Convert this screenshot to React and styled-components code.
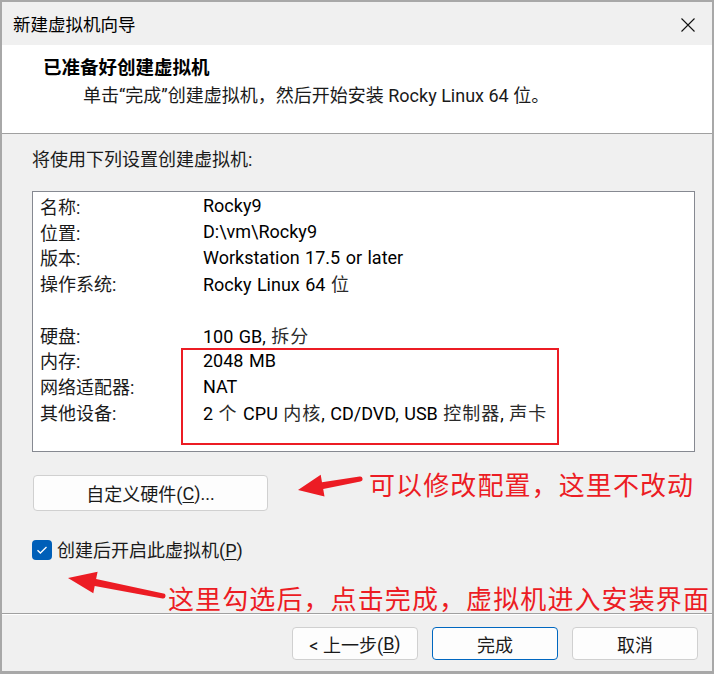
import styled, { createGlobalStyle } from "styled-components";

const GlobalStyle = createGlobalStyle`
  html, body {
    margin: 0;
    padding: 0;
    background: #ffffff;
  }
  * {
    box-sizing: border-box;
  }
`;

const UI_FONT = `Roboto, "Noto Sans CJK SC", sans-serif`;
const RED = "#ec1c24";

const Window = styled.div`
  width: 714px;
  height: 674px;
  border: 2px solid #a8a8a8;
  border-bottom-width: 3px;
  background: #f0f0f0;
  display: flex;
  flex-direction: column;
  font-family: ${UI_FONT};
  color: #1a1a1a;
`;

const TitleBar = styled.div`
  height: 43px;
  flex: none;
  display: flex;
  align-items: center;
  justify-content: space-between;
  padding: 0 17px 0 11px;
  background: #f0f0f0;
`;

const Title = styled.div`
  font-size: 17.5px;
  color: #000;
`;

const CloseBtn = styled.div`
  width: 14px;
  height: 14px;
  display: flex;
  margin-top: 2px;
`;

const Header = styled.div`
  height: 89px;
  flex: none;
  background: #ffffff;
  border-bottom: 1px solid #a0a0a0;
  padding: 10px 0 0 41px;
`;

const HeadTitle = styled.div`
  font-size: 18.5px;
  font-weight: 700;
  line-height: 26px;
  color: #000;
`;

const HeadSub = styled.div`
  margin-top: 2px;
  padding-left: 40px;
  font-size: 18px;
  line-height: 26px;
  color: #1a1a1a;
`;

const Body = styled.div`
  height: 479px;
  flex: none;
  padding: 13px 17px 0 30px;
  display: flex;
  flex-direction: column;
  font-size: 18px;
`;

const Intro = styled.div`
  line-height: 25px;
`;

const ListBox = styled.div`
  position: relative;
  margin-top: 19px;
  height: 264px;
  background: #ffffff;
  border: 1px solid #868991;
  padding: 1px 7px;
  display: grid;
  grid-template-columns: 163px 1fr;
  grid-auto-rows: 25.75px;
  align-items: center;
`;

const Label = styled.div`
  color: #1a1a1a;
`;

const Value = styled.div`
  color: #000;
  white-space: nowrap;
  word-spacing: 1px;
`;

const Han = styled.span`
  color: #2a2a2a;
  letter-spacing: 1px;
`;

const Spacer = styled.div`
  grid-column: 1 / -1;
`;

const Highlight = styled.div`
  position: absolute;
  left: 148px;
  top: 156px;
  width: 378px;
  height: 97px;
  border: 2px solid ${RED};
`;

const ActionRow = styled.div`
  margin-top: 23px;
  display: flex;
  align-items: flex-start;
`;

const Button = styled.button`
  width: ${(p) => p.$w}px;
  height: ${(p) => p.$h}px;
  flex: none;
  margin-left: ${(p) => p.$ml || 0}px;
  background: #fdfdfd;
  border: 1px solid ${(p) => (p.$primary ? "#0067c0" : "#d0d0d0")};
  border-radius: 4px;
  font-family: ${UI_FONT};
  font-size: 18px;
  color: #1a1a1a;
  padding: 0;
  display: flex;
  align-items: center;
  justify-content: center;
`;

const Key = styled.span`
  text-decoration: underline;
  text-underline-offset: 2px;
`;

const Note = styled.div`
  font-family: "Noto Sans CJK SC", sans-serif;
  font-size: 26px;
  letter-spacing: 1.1px;
  line-height: 30px;
  color: ${RED};
  white-space: nowrap;
  margin-top: ${(p) => p.$mt}px;
  margin-left: ${(p) => p.$ml}px;
`;

const Arrow = styled.svg`
  flex: none;
  display: block;
  margin-top: ${(p) => p.$mt}px;
  margin-left: ${(p) => p.$ml}px;
`;

const CheckRow = styled.label`
  margin-top: 26px;
  height: 24px;
  display: flex;
  align-items: center;
  gap: 5px;
`;

const CheckBox = styled.span`
  width: 20px;
  height: 20px;
  border-radius: 4px;
  background: #005fb8;
  display: flex;
  align-items: center;
  justify-content: center;
  margin-top: 2px;
`;

const NoteRow = styled.div`
  margin-top: 8px;
  display: flex;
  align-items: flex-start;
`;

const Footer = styled.div`
  flex: 1;
  border-top: 1px solid #a0a0a0;
  box-shadow: inset 0 1px 0 #ffffff;
  padding: 13px 14px 0 0;
  display: flex;
  justify-content: flex-end;
  gap: 14px;
`;

const rows = [
  ["名称:", "Rocky9"],
  ["位置:", "D:\\vm\\Rocky9"],
  ["版本:", "Workstation 17.5 or later"],
  ["操作系统:", "Rocky Linux 64 位"],
  null,
  ["硬盘:", "100 GB, 拆分"],
  ["内存:", "2048 MB"],
  ["网络适配器:", "NAT"],
  ["其他设备:", "2 个 CPU 内核, CD/DVD, USB 控制器, 声卡"],
];

// the CJK parts of the values are drawn by a fallback font, a little wider and lighter
const renderValue = (text) =>
  text.split(/([\u4e00-\u9fff]+)/).map((part, i) =>
    /[\u4e00-\u9fff]/.test(part) ? <Han key={i}>{part}</Han> : part
  );

const App = () => {
  return (
    <>
      <GlobalStyle />
      <Window>
        <TitleBar>
          <Title>新建虚拟机向导</Title>
          <CloseBtn>
            <svg width="14" height="14" viewBox="0 0 14 14">
              <path d="M0.5 0.5 L13.5 13.5 M13.5 0.5 L0.5 13.5" stroke="#111" strokeWidth="1.1" fill="none" />
            </svg>
          </CloseBtn>
        </TitleBar>

        <Header>
          <HeadTitle>已准备好创建虚拟机</HeadTitle>
          <HeadSub>单击“完成”创建虚拟机，然后开始安装 Rocky Linux 64 位。</HeadSub>
        </Header>

        <Body>
          <Intro>将使用下列设置创建虚拟机:</Intro>
          <ListBox>
            {rows.map((r, i) =>
              r ? (
                <div key={i} style={{ display: "contents" }}>
                  <Label>{r[0]}</Label>
                  <Value>{renderValue(r[1])}</Value>
                </div>
              ) : (
                <Spacer key={i} />
              )
            )}
            <Highlight />
          </ListBox>

          <ActionRow>
            <Button $w={235} $h={36} $ml={1}>
              自定义硬件(<Key>C</Key>)...
            </Button>
            <Arrow width="68" height="26" viewBox="0 0 68 26" $mt={-1} $ml={28}>
              <path
                d="M2 16 L24.7 0.8 L26 8.2 L63.6 2.5 A2.5 2.5 0 0 1 64.4 7.5 L27.2 15 L28.5 22.4 Z"
                fill={RED}
              />
            </Arrow>
            <Note $mt={-6} $ml={5}>可以修改配置，这里不改动</Note>
          </ActionRow>

          <CheckRow>
            <CheckBox>
              <svg width="12" height="10" viewBox="0 0 12 10">
                <path d="M1.5 5.2 L4.4 8 L10.5 2" stroke="#fff" strokeWidth="1.3" fill="none" />
              </svg>
            </CheckBox>
            <span>
              创建后开启此虚拟机(<Key>P</Key>)
            </span>
          </CheckRow>

          <NoteRow>
            <Arrow width="104" height="32" viewBox="0 0 104 32" $mt={0} $ml={32}>
              <path
                d="M4 9 L33.6 2.7 L32.1 10.1 L99.5 24.6 A2.5 2.5 0 0 1 98.5 29.5 L30.7 16.9 L29.3 24.3 Z"
                fill={RED}
              />
            </Arrow>
            <Note $mt={14} $ml={0}>这里勾选后，点击完成，虚拟机进入安装界面</Note>
          </NoteRow>
        </Body>

        <Footer>
          <Button $w={126} $h={33}>
            &lt; 上一步(<Key>B</Key>)
          </Button>
          <Button $w={126} $h={33} $primary>
            完成
          </Button>
          <Button $w={126} $h={33}>
            取消
          </Button>
        </Footer>
      </Window>
    </>
  );
};

export default App;
